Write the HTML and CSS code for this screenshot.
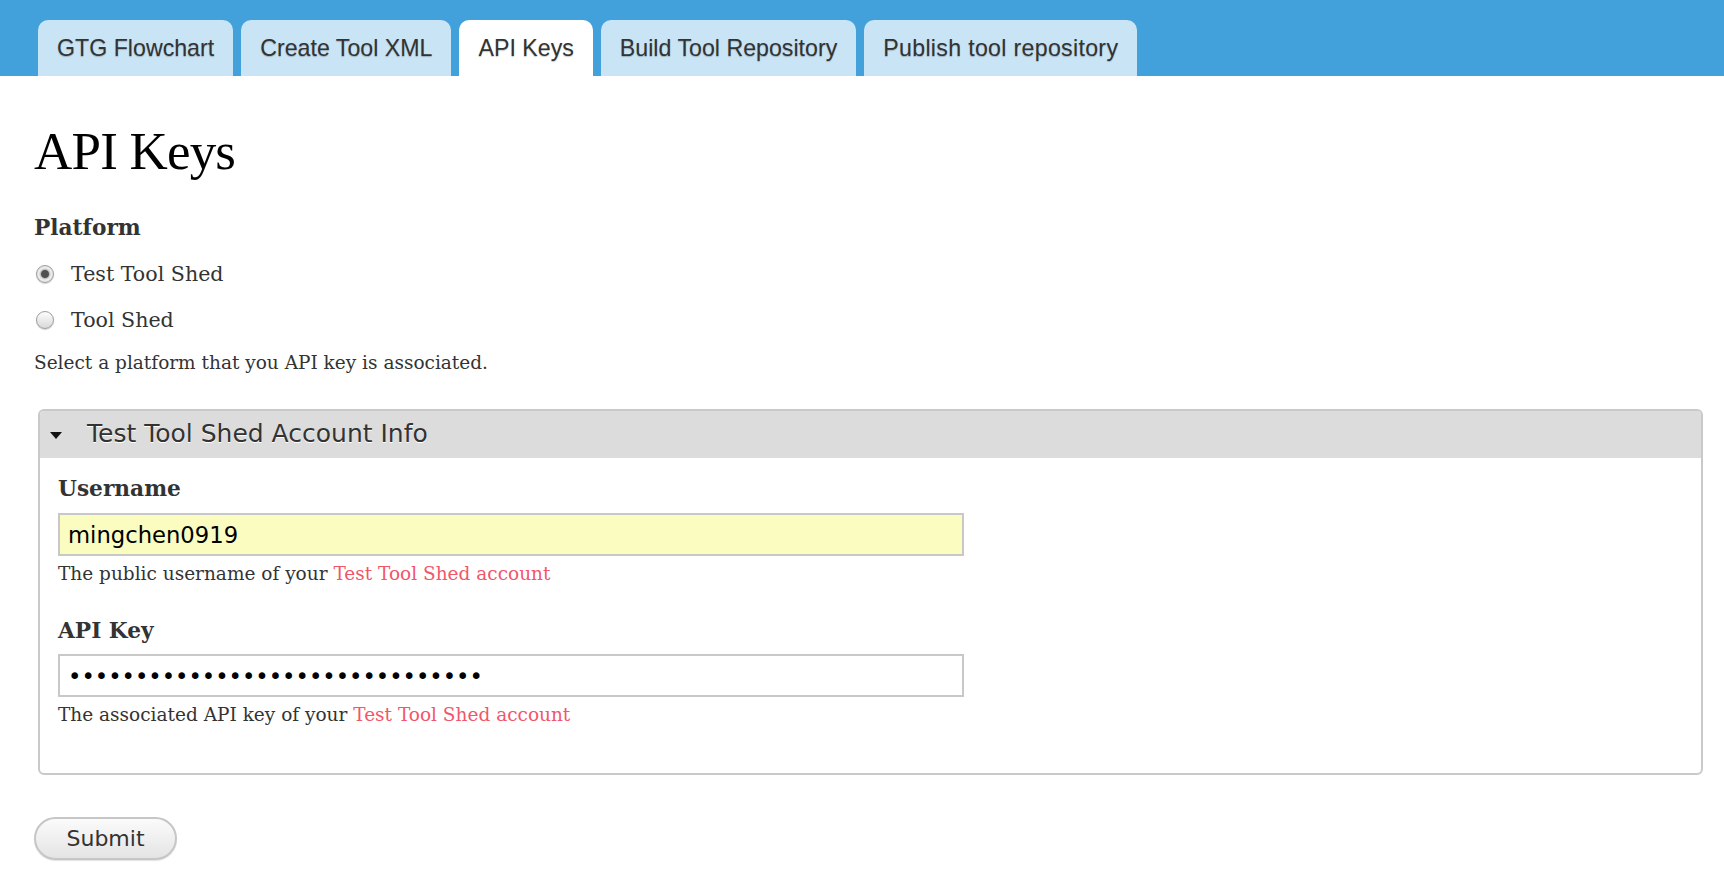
FILE: index.html
```html
<!DOCTYPE html>
<html lang="en">
<head>
<meta charset="utf-8">
<title>API Keys</title>
<link rel="stylesheet" href="styles.css">
</head>
<body>
<header class="topbar">
  <nav class="tabs">
    <a class="tab" href="#">GTG Flowchart</a>
    <a class="tab" href="#">Create Tool XML</a>
    <a class="tab tab-active" href="#">API Keys</a>
    <a class="tab" href="#">Build Tool Repository</a>
    <a class="tab tab-wide" href="#">Publish tool repository</a>
  </nav>
</header>
<main class="content">
  <h1 class="title">API Keys</h1>
  <div class="field-label platform-label">Platform</div>
  <label class="radio-row"><input class="radio" type="radio" name="platform" checked><span>Test Tool Shed</span></label>
  <label class="radio-row"><input class="radio" type="radio" name="platform"><span>Tool Shed</span></label>
  <p class="help platform-help">Select a platform that you API key is associated.</p>

  <section class="panel">
    <div class="panel-head"><span class="caret"></span><span class="panel-title">Test Tool Shed Account Info</span></div>
    <div class="panel-body">
      <label class="field-label user-label">Username</label>
      <input class="text-input autofill" type="text" value="mingchen0919">
      <p class="help input-help">The public username of your <a class="link" href="#">Test Tool Shed account</a></p>
      <label class="field-label key-label">API Key</label>
      <input class="text-input password" type="password" value="abcdefghijklmnopqrstuvwxyz12345">
      <p class="help input-help">The associated API key of your <a class="link" href="#">Test Tool Shed account</a></p>
    </div>
  </section>

  <button class="btn" type="button">Submit</button>
</main>
</body>
</html>
```
FILE: styles.css
```css
html, body {
  margin: 0;
  padding: 0;
  background: #ffffff;
}

body {
  font-family: "DejaVu Serif", Georgia, serif;
  color: #333333;
}

.topbar {
  background: #42a0da;
  height: 76px;
  box-sizing: border-box;
  padding: 20px 0 0 38px;
}

.tabs {
  display: flex;
  gap: 8px;
}

.tab {
  display: block;
  height: 56px;
  line-height: 56px;
  padding: 0 19px;
  background: #c9e4f5;
  border-radius: 10px 10px 0 0;
  font-family: "Liberation Sans", Arial, sans-serif;
  font-size: 23.2px;
  color: #333333;
  text-decoration: none;
  text-shadow: 0 1px 1px rgba(0, 0, 0, 0.22);
}

.tab-active {
  background: #ffffff;
}

.tab-wide {
  letter-spacing: 0.3px;
}

.content {
  padding: 0 21px 20px 34px;
}

.title {
  margin: 47px 0 0;
  font-family: "Liberation Serif", "Times New Roman", serif;
  font-weight: normal;
  font-size: 53px;
  letter-spacing: -0.8px;
  line-height: 56px;
  color: #000000;
}

.field-label {
  display: block;
  font-weight: bold;
  font-size: 21.7px;
  line-height: 24px;
  color: #333333;
}

.platform-label {
  margin-top: 37px;
}

.radio-row {
  display: flex;
  align-items: center;
  height: 46px;
  font-size: 20.6px;
  color: #333333;
}

.platform-label + .radio-row {
  margin-top: 11px;
}

.radio {
  appearance: none;
  -webkit-appearance: none;
  margin: 0 17px 0 2px;
  width: 18px;
  height: 18px;
  border-radius: 50%;
  border: 1px solid #9d9d9d;
  background: linear-gradient(#fdfdfd, #d9d9d9);
  box-shadow: 0 1px 1px rgba(0, 0, 0, 0.18);
  box-sizing: border-box;
  flex: none;
}

.radio:checked {
  background: radial-gradient(circle, #4f4f4f 0, #4f4f4f 3.5px, #bdbdbd 4.5px, #eeeeee 6px, #dddddd 9px);
}

.help {
  margin: 0;
  font-size: 18.5px;
  line-height: 24px;
  color: #333333;
}

.platform-help {
  margin-top: 8px;
}

.panel {
  margin: 34px 0 0 4px;
  border: 2px solid #c9c9c9;
  border-radius: 6px;
  overflow: hidden;
}

.panel-head {
  display: flex;
  align-items: center;
  height: 47px;
  background: #dcdcdc;
  padding-left: 10px;
}

.caret {
  width: 0;
  height: 0;
  border-left: 6px solid transparent;
  border-right: 6px solid transparent;
  border-top: 7px solid #111111;
  margin-right: 25px;
  margin-top: 2px;
}

.panel-title {
  font-family: "DejaVu Sans", "Lucida Grande", sans-serif;
  font-size: 25px;
  color: #333333;
  text-shadow: 0 1px 0 #ffffff;
  margin-top: -3px;
}

.panel-body {
  padding: 19px 18px 46px 18px;
}

.text-input {
  display: block;
  box-sizing: border-box;
  width: 906px;
  height: 43px;
  margin: 12px 0 0;
  padding: 0 8px;
  border: 2px solid #c8c8c8;
  background: #ffffff;
  font-family: "DejaVu Sans", "Lucida Grande", sans-serif;
  font-size: 22.7px;
  color: #000000;
  outline: none;
}

.text-input.autofill {
  background: #fafcc0;
}

.text-input.password {
  letter-spacing: 0;
}

.input-help {
  margin-top: 6px;
}

.key-label {
  margin-top: 33px;
}

.key-label + .text-input {
  margin-top: 11px;
}

.link {
  color: #f2566a;
  text-decoration: none;
}

.btn {
  display: block;
  margin-top: 42px;
  width: 143px;
  height: 43px;
  border: 2px solid #c6c6c6;
  border-radius: 22px;
  background: linear-gradient(#fbfbfb, #e4e4e4);
  font-family: "DejaVu Sans", "Lucida Grande", sans-serif;
  font-size: 22px;
  color: #333333;
  padding: 0;
  box-shadow: 0 1px 1px rgba(0, 0, 0, 0.12);
}
```
